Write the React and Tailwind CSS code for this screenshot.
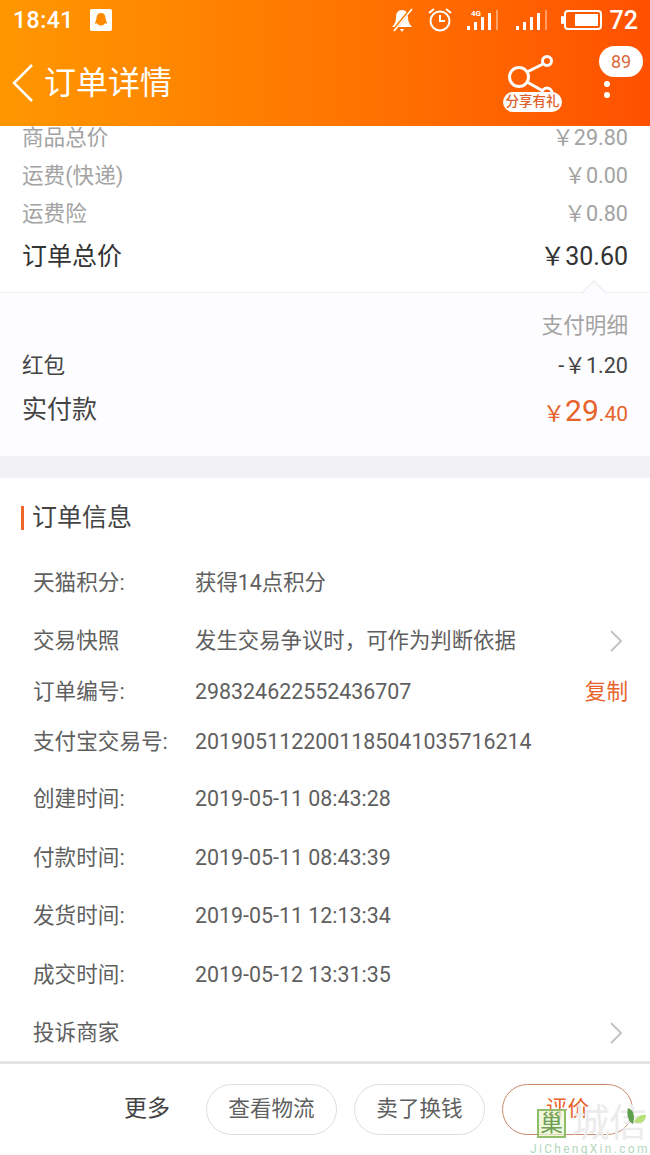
import React from 'react';

const fontStack = 'font-["Roboto","Noto_Sans_CJK_SC",sans-serif]';

const infoRows = [
  { label: '天猫积分:', value: '获得14点积分', h: 'h-[58px]' },
  { label: '交易快照', value: '发生交易争议时，可作为判断依据', h: 'h-[58px]', arrow: true },
  { label: '订单编号:', value: '298324622552436707', h: 'h-[44px]', copy: true },
  { label: '支付宝交易号:', value: '2019051122001185041035716214', h: 'h-[56px]' },
  { label: '创建时间:', value: '2019-05-11 08:43:28', h: 'h-[59px]' },
  { label: '付款时间:', value: '2019-05-11 08:43:39', h: 'h-[58px]' },
  { label: '发货时间:', value: '2019-05-11 12:13:34', h: 'h-[59px]' },
  { label: '成交时间:', value: '2019-05-12 13:31:35', h: 'h-[58px]' },
  { label: '投诉商家', value: '', h: 'h-[58px]', arrow: true },
];

function Chevron() {
  return (
    <svg className="mr-[4px]" width="16" height="24" viewBox="0 0 16 24" fill="none" stroke="#c4c4c4" strokeWidth="2">
      <path d="M3 2l10 10-10 10" />
    </svg>
  );
}

function StatusBar() {
  return (
    <div className="flex h-[40px] items-center justify-between pl-[13px] pr-[12px] text-white">
      <div className="flex items-center gap-[16px]">
        <span className="text-[23px] font-medium leading-none tracking-[0.5px]">18:41</span>
        <svg width="22" height="22" viewBox="0 0 22 22">
          <rect width="22" height="22" rx="2" fill="#fff" />
          <path d="M11 4c-3 0-4.500 2-4.500 5 0 2-1.500 4-1.500 5 0 1 1 1 2 0 .5 2 3 2.500 4 2.500s3.500-.5 4-2.500c1 1 2 1 2 0 0-1-1.500-3-1.500-5 0-3-1.500-5-4.500-5z" fill="#ff8a00" />
        </svg>
      </div>
      <div className="flex items-center">
        <svg width="24" height="26" viewBox="0 0 24 26" fill="#fff">
          <path d="M12 3c-4 0-6 3-6 7 0 4-1 7-4 10h20c-3-3-4-6-4-10 0-4-2-7-6-7zM10 22h4l-2 3z" />
          <path d="M22 1L3 24" stroke="#ff7a00" strokeWidth="3" />
          <path d="M22 2L4 24" stroke="#fff" strokeWidth="1.500" />
        </svg>
        <svg className="ml-[13px]" width="26" height="26" viewBox="0 0 26 26" fill="none" stroke="#fff" strokeWidth="2">
          <circle cx="13" cy="14" r="9.500" />
          <path d="M13 8v6h5M2 6l5-4M24 6l-5-4" />
        </svg>
        <svg className="ml-[13px]" width="34" height="26" viewBox="0 0 34 26" fill="#fff">
          <rect x="1" y="19" width="3" height="4" />
          <rect x="8" y="15" width="3" height="8" />
          <rect x="15" y="10" width="3" height="13" />
          <rect x="22" y="6" width="3" height="17" />
          <rect x="30" y="3" width="2" height="20" opacity="0.4" />
          <text x="5" y="9" fontSize="8" fontWeight="700" fontFamily="Roboto">4G</text>
        </svg>
        <svg className="ml-[15px]" width="34" height="26" viewBox="0 0 34 26" fill="#fff">
          <rect x="1" y="19" width="3" height="4" />
          <rect x="8" y="15" width="3" height="8" />
          <rect x="15" y="10" width="3" height="13" />
          <rect x="22" y="6" width="3" height="17" />
          <rect x="30" y="3" width="2" height="20" opacity="0.4" />
        </svg>
        <svg className="ml-[12px]" width="41" height="22" viewBox="0 0 41 22" fill="none">
          <rect x="0" y="7" width="3" height="8" rx="1" fill="#fff" />
          <rect x="4" y="2" width="36" height="18" rx="3" stroke="#fff" strokeWidth="2" />
          <rect x="14" y="5" width="23" height="12" fill="#fff" />
        </svg>
        <span className="ml-[8px] text-[25px] font-medium leading-none">72</span>
      </div>
    </div>
  );
}

function NavBar() {
  return (
    <div className="relative flex h-[86px] items-start pl-[10px] text-white">
      <svg className="mt-[23px]" width="24" height="40" viewBox="0 0 24 40" fill="none" stroke="#fff" strokeWidth="2.500">
        <path d="M22 2L4 20l18 18" />
      </svg>
      <span className="ml-[10px] mt-[23px] text-[32px] leading-[40px]">订单详情</span>
      <div className="absolute left-[503px] top-[15px] h-[60px] w-[60px]">
        <svg width="60" height="46" viewBox="0 0 60 46" fill="none" stroke="#fff" strokeWidth="3">
          <circle cx="16" cy="22" r="9.500" />
          <circle cx="44" cy="6" r="4.500" />
          <circle cx="44" cy="38" r="5" />
          <path d="M24 17l16-8M24 27l16 9" />
        </svg>
        <span className="absolute left-0 top-[37px] flex h-[20px] w-[59px] items-center justify-center rounded-full bg-white text-[13.5px] font-medium leading-none text-[#e0602a]">
          分享有礼
        </span>
      </div>
      <div className="absolute left-[599px] top-[6px] flex h-[31px] w-[44px] items-center justify-center rounded-full bg-white text-[18px] leading-none text-[#d9683c]">
        89
      </div>
      <div className="absolute left-[604px] top-[41px] h-[6px] w-[6px] rounded-full bg-white" />
      <div className="absolute left-[604px] top-[52px] h-[6px] w-[6px] rounded-full bg-white" />
    </div>
  );
}

export default function App() {
  return (
    <div className={`relative h-[1155px] w-[650px] overflow-hidden bg-white ${fontStack}`}>
      <div className="relative z-10 h-[126px] bg-gradient-to-r from-[#ff9700] to-[#ff5000]">
        <StatusBar />
        <NavBar />
      </div>

      {/* price summary, first row slides under the header */}
      <div className="-mt-[7px] h-[173px] px-[22px]">
        <div className="flex h-[38px] items-center justify-between text-[21.6px] text-[#a3a3a3]">
          <span>商品总价</span>
          <span>￥29.80</span>
        </div>
        <div className="flex h-[39px] items-center justify-between text-[21.6px] text-[#a3a3a3]">
          <span>运费(快递)</span>
          <span>￥0.00</span>
        </div>
        <div className="flex h-[37px] items-center justify-between text-[21.6px] text-[#a3a3a3]">
          <span>运费险</span>
          <span>￥0.80</span>
        </div>
        <div className="flex h-[46px] items-center justify-between pt-[2px] text-[25px] text-[#333333]">
          <span>订单总价</span>
          <span>￥30.60</span>
        </div>
      </div>

      {/* payment detail */}
      <div className="relative h-[164px] border-t border-[#f0eef2] bg-[#fdfcfe] px-[22px]">
        <div className="absolute left-[585px] top-[-9px] h-[18px] w-[18px] rotate-45 border-l border-t border-[#ebe9ec] bg-[#fdfcfe]" />
        <div className="flex h-[51px] items-end justify-end pb-[2px] text-[21.6px] text-[#a3a3a3]">支付明细</div>
        <div className="flex h-[38px] items-center justify-between pt-[6px] text-[21.6px] text-[#444444]">
          <span>红包</span>
          <span>-￥1.20</span>
        </div>
        <div className="flex h-[56px] items-center justify-between text-[25px] text-[#444444]">
          <span>实付款</span>
          <span className="text-[#e8632a]">
            <span className="text-[22px]">￥</span>
            <span className="text-[30px]">29</span>
            <span className="text-[21px]">.40</span>
          </span>
        </div>
      </div>

      <div className="h-[22px] bg-[#f2f2f4]" />

      {/* order info */}
      <div className="h-[583px]">
        <div className="flex h-[76px] items-center pl-[21px] pt-[3px]">
          <span className="h-[24px] w-[3px] bg-[#f0652a]" />
          <span className="ml-[8px] text-[25px] text-[#444444]">订单信息</span>
        </div>
        <div>
          {infoRows.map((row) => (
            <div key={row.label} className={`flex ${row.h} items-center pl-[33px] pr-[22px] text-[21.6px] text-[#5f5f5f]`}>
              <span className="w-[162px] shrink-0">{row.label}</span>
              <span className="flex-1 text-[21.4px]">{row.value}</span>
              {row.arrow && <Chevron />}
              {row.copy && <span className="text-[#e8632a]">复制</span>}
            </div>
          ))}
        </div>
      </div>

      {/* bottom bar */}
      <div className="h-[3px] bg-[#e4e4e4]" />
      <div className="flex h-[92px] items-start justify-end gap-[17px] pr-[17px] pt-[20px]">
        <span className="mr-[19px] flex h-[51px] items-center text-[23px] text-[#444444]">更多</span>
        <button className="h-[51px] w-[131px] rounded-full border border-[#dddddd] text-[21.6px] text-[#5f5f5f]">查看物流</button>
        <button className="h-[51px] w-[131px] rounded-full border border-[#dddddd] text-[21.6px] text-[#5f5f5f]">卖了换钱</button>
        <button className="h-[51px] w-[131px] rounded-full border border-[#c98a6c] text-[21.6px] text-[#e8632a]">评价</button>
      </div>

      {/* watermark */}
      <div className="absolute left-[530px] top-[1108px] z-20 h-[47px] w-[120px]">
        <div className="flex h-[30px] items-center pl-[7px]">
          <span className="flex h-[29px] w-[29px] items-center justify-center border-2 border-[#8fbf6a] bg-[#eaf7d0]/70 text-[23px] leading-none text-[#6f9e55]">巢</span>
          <span className="ml-[6px] whitespace-nowrap text-[38px] leading-none tracking-[-1px] text-[#ececec]">城信</span>
        </div>
        <span className="mt-[5px] block whitespace-nowrap text-[12px] leading-[12px] tracking-[2.300px] text-[#b4d8bc]">JiChengXin.com</span>
        <svg className="absolute left-[96px] top-0" width="22" height="22" viewBox="0 0 22 22">
          <path d="M2 0c6 2 7 8 5 16-4-2-7-8-5-16z" fill="#5f9e4f" />
          <path d="M8 14c2-5 7-8 12-7 0 6-5 10-12 7z" fill="#b6e07a" />
        </svg>
      </div>
    </div>
  );
}
